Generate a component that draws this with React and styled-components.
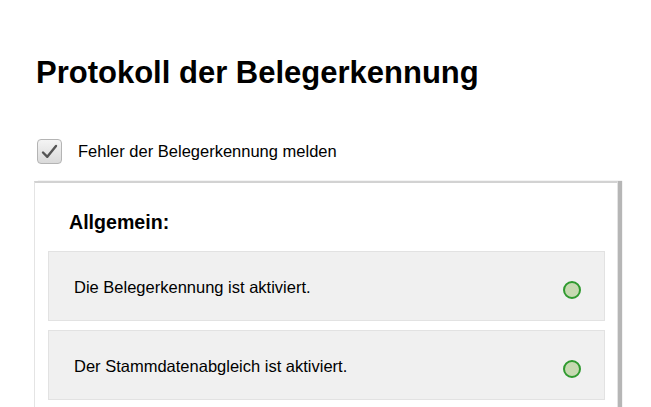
import React from "react";
import styled, { createGlobalStyle } from "styled-components";

const Global = createGlobalStyle`
  html, body {
    margin: 0;
    padding: 0;
    background: #fff;
    font-family: "Liberation Sans", Arial, sans-serif;
    color: #000;
  }
`;

const Page = styled.div`
  padding: 0 0 0 34px;
  width: 651px;
  height: 407px;
  box-sizing: border-box;
  overflow: hidden;
`;

const Title = styled.h1`
  margin: 0;
  padding: 55px 0 0 2px;
  font-size: 31px;
  line-height: 36px;
  font-weight: bold;
`;

const CheckRow = styled.label`
  display: flex;
  align-items: center;
  gap: 16px;
  margin: 48px 0 0 3px;
  font-size: 16.5px;
`;

const Box = styled.span`
  width: 23px;
  height: 23px;
  border: 1px solid #b4b4b4;
  border-radius: 4px;
  background: linear-gradient(#f4f4f4, #dadada);
  display: flex;
  align-items: center;
  justify-content: center;
`;

const Card = styled.section`
  margin-top: 17px;
  width: 584px;
  height: 260px;
  box-sizing: border-box;
  border: 1px solid #e4e4e4;
  border-top: 2px solid #d2d2d2;
  box-shadow: 4px 0 1px #b6b6b6;
  padding: 0 12px 0 13px;
`;

const Heading = styled.h2`
  margin: 0;
  padding: 28px 0 0 21px;
  height: 68px;
  box-sizing: border-box;
  font-size: 19.6px;
  line-height: 22px;
  font-weight: bold;
`;

const List = styled.div`
  display: flex;
  flex-direction: column;
  gap: 9px;
`;

const Row = styled.div`
  display: flex;
  justify-content: space-between;
  align-items: flex-start;
  height: 70px;
  box-sizing: border-box;
  background: #f0f0f0;
  border: 1px solid #e2e2e2;
  padding: 25px 23px 0 25px;
  font-size: 16.5px;
  line-height: 20px;
`;

const Dot = styled.span`
  width: 14px;
  height: 14px;
  margin-top: 4px;
  border-radius: 50%;
  border: 2px solid #2f9a2f;
  background: #c6d9b1;
`;

const rows = [
  "Die Belegerkennung ist aktiviert.",
  "Der Stammdatenabgleich ist aktiviert.",
];

export default function App() {
  return (
    <>
      <Global />
      <Page>
        <Title>Protokoll der Belegerkennung</Title>
        <CheckRow>
          <Box>
            <svg width="17" height="15" viewBox="0 0 17 15">
              <path
                d="M2 8.5 L6.3 12.8 L15 2"
                fill="none"
                stroke="#555"
                strokeWidth="2.4"
                strokeLinecap="round"
                strokeLinejoin="round"
              />
            </svg>
          </Box>
          Fehler der Belegerkennung melden
        </CheckRow>
        <Card>
          <Heading>Allgemein:</Heading>
          <List>
            {rows.map((r) => (
              <Row key={r}>
                {r}
                <Dot />
              </Row>
            ))}
          </List>
        </Card>
      </Page>
    </>
  );
}
